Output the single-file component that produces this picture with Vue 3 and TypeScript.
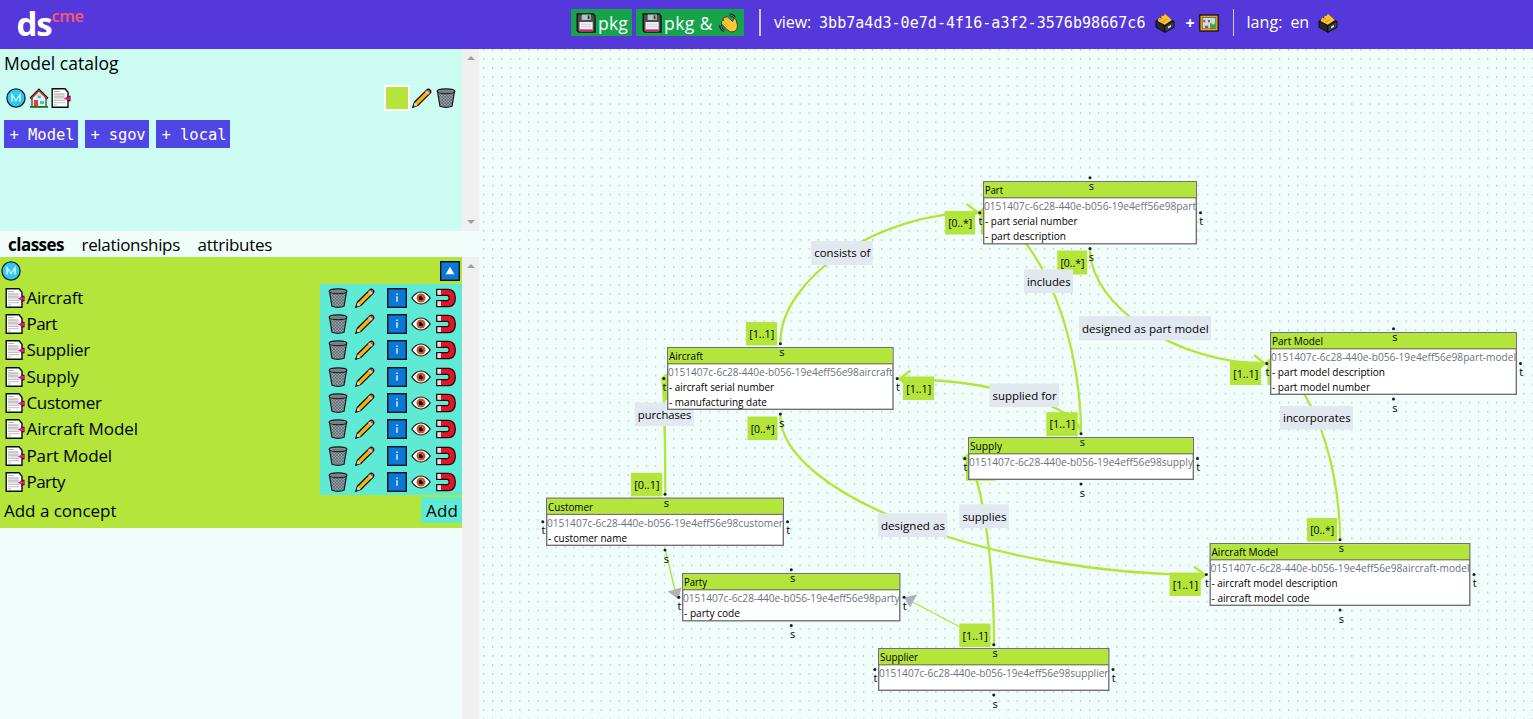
<script setup lang="ts">
import type { Directive } from 'vue'

/* Tracks a text run so that it fills the given width in pixels. */
const vFit: Directive<HTMLElement, number> = {
  mounted(el, binding) {
    const natural = el.getBoundingClientRect().width
    const count = (el.textContent ?? '').length
    if (count > 0) el.style.letterSpacing = `${(binding.value - natural) / count}px`
  },
}

interface Concept { name: string; width: number }
const concepts: Concept[] = [
  { name: 'Aircraft', width: 56.5 },
  { name: 'Part', width: 30.5 },
  { name: 'Supplier', width: 63.5 },
  { name: 'Supply', width: 52.5 },
  { name: 'Customer', width: 75 },
  { name: 'Aircraft Model', width: 111.5 },
  { name: 'Part Model', width: 85.5 },
  { name: 'Party', width: 38.5 },
]

interface Line { text: string; width: number }
interface UmlNode {
  title: string; titleWidth: number; id: string
  x: number; y: number; w: number; h: number
  attrs: Line[]
}
const prefix = '0151407c-6c28-440e-b056-19e4eff56e98'
const nodes: UmlNode[] = [
  { title: 'Part', titleWidth: 18, id: 'part', x: 983, y: 181, w: 214, h: 63.5, attrs: [{ text: '- part serial number', width: 92.5 }, { text: '- part description', width: 81 }] },
  { title: 'Aircraft', titleWidth: 34, id: 'aircraft', x: 667, y: 347, w: 226.7, h: 63, attrs: [{ text: '- aircraft serial number', width: 105 }, { text: '- manufacturing date', width: 98 }] },
  { title: 'Part Model', titleWidth: 51, id: 'part-model', x: 1270, y: 332, w: 247, h: 63, attrs: [{ text: '- part model description', width: 113 }, { text: '- part model number', width: 98 }] },
  { title: 'Supply', titleWidth: 32, id: 'supply', x: 968, y: 437, w: 226, h: 43, attrs: [] },
  { title: 'Customer', titleWidth: 45, id: 'customer', x: 546, y: 497.5, w: 238, h: 48.5, attrs: [{ text: '- customer name', width: 79 }] },
  { title: 'Party', titleWidth: 23, id: 'party', x: 682, y: 573, w: 218.5, h: 48.5, attrs: [{ text: '- party code', width: 56 }] },
  { title: 'Supplier', titleWidth: 38, id: 'supplier', x: 878, y: 648, w: 231.5, h: 43, attrs: [] },
  { title: 'Aircraft Model', titleWidth: 66.5, id: 'aircraft-model', x: 1209.5, y: 543, w: 261, h: 63, attrs: [{ text: '- aircraft model description', width: 126 }, { text: '- aircraft model code', width: 98 }] },
]

interface Edge { sx: number; sy: number; tx: number; ty: number; side: 1 | -1 }
const edges: Edge[] = [
  { sx: 780.3, sy: 343, tx: 977.5, ty: 212.3, side: 1 },
  { sx: 780.3, sy: 415, tx: 1205, ty: 575, side: 1 },
  { sx: 1090, sy: 249, tx: 1265, ty: 363.5, side: 1 },
  { sx: 1081, sy: 434, tx: 978, ty: 213, side: -1 },
  { sx: 1081, sy: 434, tx: 899.5, ty: 379, side: -1 },
  { sx: 665.3, sy: 494, tx: 662, ty: 378.5, side: -1 },
  { sx: 994, sy: 645, tx: 963.5, ty: 458.5, side: -1 },
  { sx: 1340, sy: 540, tx: 1265.5, ty: 363.5, side: -1 },
]
const curve = (e: Edge): string =>
  `M${e.sx} ${e.sy}C${e.sx} ${(e.sy + e.ty) / 2} ${(e.sx + e.tx) / 2} ${e.ty} ${e.tx} ${e.ty}`
const arrow = (e: Edge): string =>
  `M${e.tx - 11 * e.side} ${e.ty - 8.5}L${e.tx} ${e.ty}L${e.tx - 11 * e.side} ${e.ty + 8.5}`

interface Box { text: string; x: number; y: number; w: number; h: number }
const counts: Box[] = [
  { text: '[0..*]', x: 945, y: 211, w: 30, h: 23.5 },
  { text: '[1..1]', x: 746, y: 322, w: 31, h: 23.5 },
  { text: '[0..*]', x: 747.5, y: 416.5, w: 30, h: 23.5 },
  { text: '[1..1]', x: 903, y: 376.5, w: 31, h: 23.5 },
  { text: '[0..*]', x: 1057.2, y: 250.5, w: 30, h: 24 },
  { text: '[1..1]', x: 1230, y: 361.5, w: 31, h: 23.5 },
  { text: '[0..*]', x: 1307, y: 518, w: 30, h: 23.5 },
  { text: '[1..1]', x: 1169.5, y: 572.5, w: 31.3, h: 23.5 },
  { text: '[1..1]', x: 1046.3, y: 412.2, w: 31.5, h: 24 },
  { text: '[1..1]', x: 959.3, y: 623.5, w: 31.3, h: 23.5 },
  { text: '[0..1]', x: 631, y: 472.8, w: 31.3, h: 23.5 },
]
/* Multiplicity plates that sit underneath a class box. */
const plates = [
  { x: 981, y: 211, w: 30, h: 23.5 },
  { x: 1267.5, y: 361.5, w: 31, h: 23.5 },
  { x: 966, y: 457, w: 30, h: 23.7 },
  { x: 664.5, y: 377, w: 31, h: 23.5 },
]
const labels: Box[] = [
  { text: 'consists of', x: 811.3, y: 241, w: 61.5, h: 24 },
  { text: 'includes', x: 1024, y: 269.3, w: 49, h: 23.7 },
  { text: 'designed as part model', x: 1079, y: 316.2, w: 132, h: 24 },
  { text: 'incorporates', x: 1280, y: 406, w: 73, h: 23.7 },
  { text: 'supplied for', x: 989.5, y: 383.5, w: 69.5, h: 23.5 },
  { text: 'supplies', x: 959.4, y: 504.3, w: 49.5, h: 23.7 },
  { text: 'designed as', x: 878, y: 513.5, w: 69.3, h: 23.5 },
  { text: 'purchases', x: 634.8, y: 402.5, w: 59, h: 23.5 },
]
</script>

<template>
  <div class="app">
    <svg class="sprites" aria-hidden="true">
      <symbol id="i-m" viewBox="0 0 20 20">
        <circle cx="10" cy="10" r="9.1" fill="#30c9f6" stroke="#12242b" stroke-width="1.3" />
        <path d="M6 13.6V6.7L10 12.6L14 6.7V13.6" fill="none" stroke="#d9fbff" stroke-width="1.4" />
      </symbol>
      <symbol id="i-house" viewBox="0 0 20 20">
        <path d="M3 10V18.5H17V10L10 3Z" fill="#eef1f2" stroke="#111" stroke-width="1" />
        <path d="M1.4 10.6L10 1.9L18.6 10.6" fill="none" stroke="#111" stroke-width="2.4" />
        <path d="M2.2 10.4L10 2.6L17.8 10.4" fill="none" stroke="#e8472b" stroke-width="1.2" />
        <rect x="5" y="12" width="4" height="6.3" fill="#e8402a" />
        <path d="M11 13h4v3h-4zM8.4 7.5h3.4v2.8H8.4z" fill="#35c4ee" />
        <path d="M1 18h18v1.8H1z" fill="#14751b" />
      </symbol>
      <symbol id="i-doc" viewBox="0 0 20 20">
        <path d="M1.2 .8H14L17 4.3V19.2H1.2Z" fill="#fff" stroke="#0b0b0b" stroke-width="1.4" />
        <path d="M3 3.6h6" stroke="#9b9b9b" stroke-width=".8" />
        <rect x="3" y="5.2" width="11" height="6.3" fill="#dedede" />
        <path d="M3 6h10M3 9h10M3 12.4h11M3 14.7h11M3 16.9h3" stroke="#aaa" stroke-width=".8" />
        <path d="M16.5 7.8H19.5V13.3H16.5Z" fill="#111" />
        <path d="M13 10.6L16 8.8H19V12.3H16Z" fill="#ee0b8d" />
      </symbol>
      <symbol id="i-pencil" viewBox="0 0 20 20">
        <path d="M.8 19.2L2.5 14.2L14.6 2.1Q16.2 .4 18 2Q19.6 3.8 18 5.4L5.8 17.5Z" fill="#ffb300" stroke="#101010" stroke-width="1.3" />
        <path d="M1.1 18.9L2.8 14.4L5.6 17.2Z" fill="#f3d6b0" />
        <path d="M.8 19.2L1.5 17.1L2.9 18.5Z" fill="#111" />
        <path d="M13.2 3.8L14.7 2.4L17.6 5.3L16.2 6.7Z" fill="#c9cdd2" />
        <path d="M14.9 2.3Q16.3 1.2 17.6 2.4Q18.9 3.7 17.7 5.1Z" fill="#e5414c" />
      </symbol>
      <pattern id="mesh" width="3" height="3" patternUnits="userSpaceOnUse">
        <path d="M0 0L3 3M3 0L0 3" stroke="#4a555d" stroke-width=".5" />
      </pattern>
      <symbol id="i-trash" viewBox="0 0 20 20">
        <path d="M1.5 3.3L4 18.3Q10 20.4 16 18.3L18.5 3.3Z" fill="#8f9ca3" stroke="#151515" stroke-width="1.2" />
        <path d="M2.5 6L4.5 17.5Q10 19.4 15.5 17.5L17.5 6Z" fill="url(#mesh)" />
        <ellipse cx="10" cy="3.3" rx="8.9" ry="2.4" fill="#7f8b92" stroke="#151515" stroke-width="1.1" />
        <path d="M4 3.9H16" stroke="#68747c" stroke-width="1" />
      </symbol>
      <symbol id="i-info" viewBox="0 0 20 20">
        <rect x=".7" y=".7" width="18.6" height="18.6" fill="#0b78d7" stroke="#06131e" stroke-width="1.4" />
        <path d="M9.2 5.5h1.6v1.5H9.2zM9.2 8.2h1.6v5.6H9.2z" fill="#cfe8fc" />
      </symbol>
      <symbol id="i-up" viewBox="0 0 20 20">
        <rect x=".7" y=".7" width="18.6" height="18.6" fill="#0b78d7" stroke="#06131e" stroke-width="1.4" />
        <path d="M10 5.7L14.3 13.3H5.7Z" fill="#fff" />
      </symbol>
      <symbol id="i-eye" viewBox="0 0 20 20">
        <path d="M.8 10Q5 4 10 4T19.2 10Q15 16 10 16T.8 10Z" fill="#fff" stroke="#111" stroke-width="1.2" />
        <circle cx="10" cy="10" r="4.5" fill="#d4531b" />
        <circle cx="10" cy="10" r="2.3" fill="#0a0a0a" />
        <circle cx="11.2" cy="8.8" r=".6" fill="#fff" />
      </symbol>
      <symbol id="i-magnet" viewBox="0 0 20 20">
        <path d="M.7 1.3H13Q19.3 2.2 19.3 10T13 18.7H.7V12.6H11.5Q13.2 12.2 13.2 10T11.5 7.4H.7Z" fill="#e81224" stroke="#111" stroke-width="1.3" />
        <path d="M1.4 2H5V6.7H1.4zM1.4 13.3H5V18H1.4z" fill="#dfe4e6" />
      </symbol>
      <symbol id="i-floppy" viewBox="0 0 20 20">
        <path d="M1.2 1H17.3L19 2.8V19H2.7L1.2 17.4Z" fill="#484d50" stroke="#151515" stroke-width="1.4" />
        <path d="M5.7 1.5H14.8V7H5.7z" fill="#b9bfc2" />
        <path d="M11.7 2.4h1.8v3.8h-1.8z" fill="#33383b" />
        <path d="M3.5 9H16.7V18.3H3.5z" fill="#eef0f1" />
        <path d="M3.5 16.4H16.7V18.3H3.5z" fill="#e3127c" />
        <path d="M5 11.3H15M5 13.5H15" stroke="#c5c9cb" stroke-width=".7" />
      </symbol>
      <symbol id="i-wave" viewBox="0 0 20 20">
        <path d="M10.5 1.9Q13.7 1.4 15.6 4.6M1.6 12Q1.4 16 5.2 17.8" fill="none" stroke="#111" stroke-width="2.6" />
        <path d="M10.5 1.9Q13.7 1.4 15.6 4.6M1.6 12Q1.4 16 5.2 17.8" fill="none" stroke="#29a9df" stroke-width="1" />
        <path d="M2.6 8.6Q3.2 7 4.6 7.6L4.2 5.7Q4.6 4.1 6.2 4.7Q7 3 8.6 4.1L13.7 8.5L14.5 6.2Q15.8 4.9 16.9 6.5L18.5 12.2Q18.9 16.4 15.5 18.5Q11.4 20 8.2 16.8L3 11.3Q1.9 9.9 2.6 8.6Z" fill="#ffc83d" stroke="#151515" stroke-width=".7" />
        <path d="M5 8L9.3 12.4M6.5 5.2L11 9.8M4 10L8 14" fill="none" stroke="#c48d20" stroke-width=".6" />
      </symbol>
      <symbol id="i-box" viewBox="0 0 20 20">
        <path d="M1 7.7L9.8 13V19.3L1 14.2Z" fill="#26282b" stroke="#0b0b0b" stroke-width="1" />
        <path d="M9.8 13L19 8.2V14.3L9.8 19.3Z" fill="#3d4144" stroke="#0b0b0b" stroke-width="1" />
        <path d="M1 7.6L9.7 1.4L19 8L9.8 12.9Z" fill="#1c1c1c" />
        <path d="M2.6 8L4 4.8L6 5L6.6 2.9L9 2.6L9.8 .8L17 7L9.8 11.7Z" fill="#ffc02e" />
        <path d="M4.6 6.6L7.6 5.4M7.4 8.8L11.6 6.6" stroke="#b87414" stroke-width=".7" />
        <path d="M13 13.6l3-1.5v2l-3 1.5z" fill="#d9dddf" />
      </symbol>
      <symbol id="i-picture" viewBox="0 0 20 20">
        <rect x=".8" y="2" width="18.4" height="16" fill="#f0a51c" stroke="#111" stroke-width="1.3" />
        <rect x="3.2" y="4.4" width="13.6" height="11.2" fill="#a9e4f7" stroke="#69490f" stroke-width=".7" />
        <path d="M9.7 15.3V11.4L12 9.8L14.2 11.8L16.5 9.7V15.3Z" fill="#40a836" />
        <path d="M4.3 15.3V8.5L6 7.5L7.6 9L9.5 7.5L11 8.5V15.3Z" fill="#d9d8dc" />
        <path d="M4.3 7h2v2.3h-2zM9 7h2v2.3H9zM6 12.8h3.2v2.2H6z" fill="#b74242" />
      </symbol>
    </svg>

    <header class="topbar">
      <div class="brand"><b v-fit="35">ds</b><sup v-fit="32">cme</sup></div>
      <div class="tools">
        <button class="save"><svg><use href="#i-floppy" /></svg><span v-fit="30">pkg</span></button>
        <button class="save wide"><svg><use href="#i-floppy" /></svg><span v-fit="49">pkg &amp;</span><svg class="hand"><use href="#i-wave" /></svg></button>
        <i class="divider view-divider"></i>
        <span v-fit="37" class="word">view:</span>
        <code v-fit="326.5">3bb7a4d3-0e7d-4f16-a3f2-3576b98667c6</code>
        <svg class="drawer"><use href="#i-box" /></svg>
        <b class="plus">+</b>
        <svg><use href="#i-picture" /></svg>
        <i class="divider lang-divider"></i>
        <span v-fit="36" class="word">lang:</span>
        <span v-fit="18.5" class="word locale">en</span>
        <svg class="drawer"><use href="#i-box" /></svg>
      </div>
    </header>

    <div class="body">
      <aside class="sidebar">
        <section class="catalog">
          <div class="catalog-main">
            <div class="heading"><span v-fit="114.5">Model catalog</span></div>
            <div class="model-row">
              <svg><use href="#i-m" /></svg>
              <svg class="home"><use href="#i-house" /></svg>
              <svg><use href="#i-doc" /></svg>
              <span class="swatch"></span>
              <svg class="edit"><use href="#i-pencil" /></svg>
              <svg><use href="#i-trash" /></svg>
            </div>
            <div class="add-row">
              <button><span v-fit="65">+ Model</span></button>
              <button><span v-fit="55">+ sgov</span></button>
              <button><span v-fit="65">+ local</span></button>
            </div>
          </div>
          <div class="scrollbar"><i class="tri up"></i><i class="tri down"></i></div>
        </section>

        <nav class="tabs">
          <b v-fit="56">classes</b>
          <span v-fit="98.5">relationships</span>
          <span v-fit="74.5">attributes</span>
        </nav>

        <section class="list">
          <div class="list-main">
            <div class="list-content">
              <div class="list-head">
                <svg><use href="#i-m" /></svg>
                <svg><use href="#i-up" /></svg>
              </div>
              <div v-for="c in concepts" :key="c.name" class="row">
                <svg class="row-doc"><use href="#i-doc" /></svg>
                <span v-fit="c.width" class="row-name">{{ c.name }}</span>
                <div class="actions">
                  <svg><use href="#i-trash" /></svg>
                  <svg><use href="#i-pencil" /></svg>
                  <svg><use href="#i-info" /></svg>
                  <svg><use href="#i-eye" /></svg>
                  <svg><use href="#i-magnet" /></svg>
                </div>
              </div>
              <div class="new-row">
                <span v-fit="112.5">Add a concept</span>
                <button><span v-fit="32">Add</span></button>
              </div>
            </div>
          </div>
          <div class="scrollbar"><i class="tri up"></i></div>
        </section>
      </aside>

      <main class="canvas">
        <svg class="diagram" width="1054" height="670" viewBox="479 49 1054 670">
          <defs>
            <pattern id="dots" x="483" y="49" width="9.045" height="9.045" patternUnits="userSpaceOnUse">
              <ellipse cx=".7" cy=".8" rx=".5" ry=".8" fill="#a3abab" />
            </pattern>
          </defs>
          <rect x="479" y="49" width="1054" height="670" fill="url(#dots)" />

          <g class="edges">
            <path v-for="(e, i) in edges" :key="'c' + i" :d="curve(e)" />
            <path v-for="(e, i) in edges" :key="'a' + i" :d="arrow(e)" />
          </g>
          <g class="inherit">
            <path d="M665.3 550L675.5 592M994 645L908 599.5" />
            <path class="tip" d="M667.5 591.5L681.5 587.5L678.3 599Z" />
            <path class="tip" d="M904 597.5L917 594.5L910 607.5Z" />
          </g>

          <g class="counts">
            <rect v-for="(p, i) in plates" :key="'p' + i" :x="p.x" :y="p.y" :width="p.w" :height="p.h" />
            <template v-for="(b, i) in counts" :key="i">
              <rect :x="b.x" :y="b.y" :width="b.w" :height="b.h" />
              <text :x="b.x + 3.2" :y="b.y + 16" :textLength="b.w - 6" lengthAdjust="spacingAndGlyphs">{{ b.text }}</text>
            </template>
          </g>
          <g class="labels">
            <template v-for="b in labels" :key="b.text">
              <rect :x="b.x" :y="b.y" :width="b.w" :height="b.h" />
              <text :x="b.x + 3" :y="b.y + 16.3" :textLength="b.w - 5.4" lengthAdjust="spacingAndGlyphs">{{ b.text }}</text>
            </template>
          </g>

          <g v-for="n in nodes" :key="n.id" class="node">
            <rect class="frame" :x="n.x + .7" :y="n.y + .7" :width="n.w - 1.4" :height="n.h - 1.4" />
            <rect class="title" :x="n.x + 1.3" :y="n.y + 1.3" :width="n.w - 2.6" height="14.9" />
            <path class="rule" :d="`M${n.x + 1} ${n.y + 16.8}H${n.x + n.w - 1}`" />
            <text :x="n.x + 2" :y="n.y + 13.3" :textLength="n.titleWidth" lengthAdjust="spacingAndGlyphs">{{ n.title }}</text>
            <text class="uri" :x="n.x + 1" :y="n.y + 29" :textLength="n.w - 2" lengthAdjust="spacingAndGlyphs">{{ prefix + n.id }}</text>
            <text v-for="(a, i) in n.attrs" :key="a.text" :x="n.x + 2" :y="n.y + 44 + i * 15" :textLength="a.width" lengthAdjust="spacingAndGlyphs">{{ a.text }}</text>
            <circle :cx="n.x + n.w / 2" :cy="n.y - 3.3" r="1.5" />
            <circle :cx="n.x + n.w / 2" :cy="n.y + n.h + 4" r="1.5" />
            <circle :cx="n.x - 3.2" :cy="n.y + n.h / 2" r="1.5" />
            <circle :cx="n.x + n.w + 3.5" :cy="n.y + n.h / 2" r="1.5" />
            <text :x="n.x + n.w / 2 - 1.2" :y="n.y + 9">s</text>
            <text :x="n.x + n.w / 2 - 1.2" :y="n.y + n.h + 16.7">s</text>
            <text :x="n.x - 4.5" :y="n.y + n.h / 2 + 12.5">t</text>
            <text :x="n.x + n.w + 2.3" :y="n.y + n.h / 2 + 12.5">t</text>
          </g>
        </svg>
      </main>
    </div>
  </div>
</template>

<style>
body {
  margin: 0;
  overflow: hidden;
}
</style>

<style scoped>
.app {
  width: 1533px;
  height: 719px;
  display: flex;
  flex-direction: column;
  background: #f0fdfa;
  color: #000;
  font-family: 'Open Sans', 'Noto Sans', sans-serif;
  font-size: 17px;
  overflow: hidden;
}
.sprites {
  position: absolute;
  width: 0;
  height: 0;
}
svg {
  width: 20px;
  height: 20px;
  flex: none;
  display: block;
}
span,
b,
code,
sup {
  white-space: nowrap;
}
button {
  border: 0;
  padding: 0;
  font: inherit;
  color: inherit;
  display: flex;
  align-items: center;
}

.topbar {
  height: 49px;
  flex: none;
  display: flex;
  align-items: center;
  background: #5538da;
  color: #fff;
}
.brand {
  width: 571px;
  height: 49px;
  padding-left: 16.5px;
  box-sizing: border-box;
  display: flex;
  align-items: flex-start;
}
.brand b {
  font-size: 33px;
  line-height: 48px;
}
.brand sup {
  font-size: 16.5px;
  line-height: 20px;
  margin-top: 6px;
  font-weight: 600;
  color: #ff5572;
}
.tools {
  display: flex;
  align-items: center;
  height: 27px;
  margin-top: -4px;
}
.tools > span {
  flex: none;
}
.save {
  width: 61px;
  height: 27px;
  background: #16a34a;
  padding-left: 5px;
  box-sizing: border-box;
  margin-right: 4px;
  font-size: 17.5px;
}
.save span {
  margin-left: 2px;
}
.wide {
  width: 108px;
  padding-left: 6px;
  margin-right: 15px;
}
.hand {
  margin-left: 6px;
}
.divider {
  width: 2px;
  height: 27px;
  background: #cdc6f5;
}
.lang-divider {
  width: 1px;
  margin: 0 13px 0 14px;
}
.view-divider {
  margin-right: 13px;
}
.word {
  font-size: 16px;
  position: relative;
  top: -.5px;
}
code {
  margin: 0 9px 0 8px;
  font-family: 'DejaVu Sans Mono', monospace;
  font-size: 15px;
}
.plus {
  width: 13px;
  margin-left: 11px;
  font-size: 16px;
}
.locale {
  margin: 0 9px 0 8px;
}

.body {
  flex: 1;
  min-height: 0;
  display: flex;
}
.sidebar {
  width: 479px;
  flex: none;
  display: flex;
  flex-direction: column;
}
.catalog {
  height: 182px;
  flex: none;
  display: flex;
  background: #ccfbf1;
}
.catalog-main {
  width: 462px;
}
.heading {
  height: 28px;
  line-height: 28px;
  padding-left: 4px;
  font-size: 17.5px;
}
.model-row {
  height: 42px;
  display: flex;
  align-items: center;
  padding: 0 6.5px 0 5.5px;
}
.home {
  margin: 0 2px 0 3px;
}
.swatch {
  width: 22px;
  height: 22px;
  margin-left: auto;
  border: 2px solid #fff;
  background: #b3e53b;
}
.edit {
  margin: 0 4px 0 2px;
}
.add-row {
  display: flex;
  gap: 7px;
  padding: 1px 0 0 4px;
}
.add-row button {
  height: 28px;
  padding: 1px 3.5px 0 5.5px;
  background: #4f46e5;
  color: #fff;
  font-family: 'DejaVu Sans Mono', monospace;
  font-size: 15.5px;
}
.scrollbar {
  width: 17px;
  flex: none;
  display: flex;
  flex-direction: column;
  align-items: center;
  background: #f0f0f0;
}
.tri {
  border: 4px solid transparent;
  border-top-width: 0;
  border-bottom: 4px solid #9f9f9f;
  margin-top: 7px;
}
.tri.down {
  border-top: 4px solid #9f9f9f;
  border-bottom: 0;
  margin: auto 0 7px;
}
.tabs {
  height: 26px;
  flex: none;
  display: flex;
  align-items: center;
  padding-left: 8px;
  gap: 17.5px;
}
.list {
  flex: 1;
  min-height: 0;
  display: flex;
}
.list-main {
  width: 462px;
}
.list-content {
  background: #b3e53b;
}
.list-head {
  height: 27px;
  display: flex;
  align-items: center;
  justify-content: space-between;
  padding: 0 2px 0 1px;
}
.row {
  height: 26.35px;
  display: flex;
  align-items: center;
}
.row-doc {
  margin: 1px 1.5px 0 5px;
}
.actions {
  margin-left: auto;
  width: 142px;
  height: 100%;
  box-sizing: border-box;
  padding: 1px 0 0 8px;
  display: grid;
  grid-template-columns: 26.5px 32.5px 24px 24.5px 20px;
  align-items: center;
  background: #5eead4;
}
.new-row {
  height: 33px;
  display: flex;
  align-items: center;
  justify-content: space-between;
  padding: 0 0 2px 4px;
  box-sizing: border-box;
}
.new-row button {
  width: 41px;
  height: 26px;
  padding-left: 5px;
  background: #5eead4;
}

.canvas {
  flex: 1;
  min-width: 0;
}
.diagram {
  width: 1054px;
  height: 670px;
  font-size: 11px;
}
.edges path {
  fill: none;
  stroke: #b3e53b;
  stroke-width: 2.3;
}
.inherit path {
  fill: none;
  stroke: #b3e53b;
  stroke-width: 1.4;
}
.inherit .tip {
  fill: #b1b1b7;
  stroke: none;
}
.counts rect {
  fill: #b3e53b;
}
.counts text,
.labels text {
  font-size: 11.5px;
}
.labels rect {
  fill: #e2e8f0;
}
.frame {
  fill: #fff;
  stroke: #6b6b6b;
  stroke-width: 1.3;
}
.title {
  fill: #b3e53b;
}
.rule {
  stroke: #4d5c22;
  stroke-width: 1;
}
.node .uri {
  fill: #6b7280;
}
.node circle {
  fill: #1a192b;
}
</style>
